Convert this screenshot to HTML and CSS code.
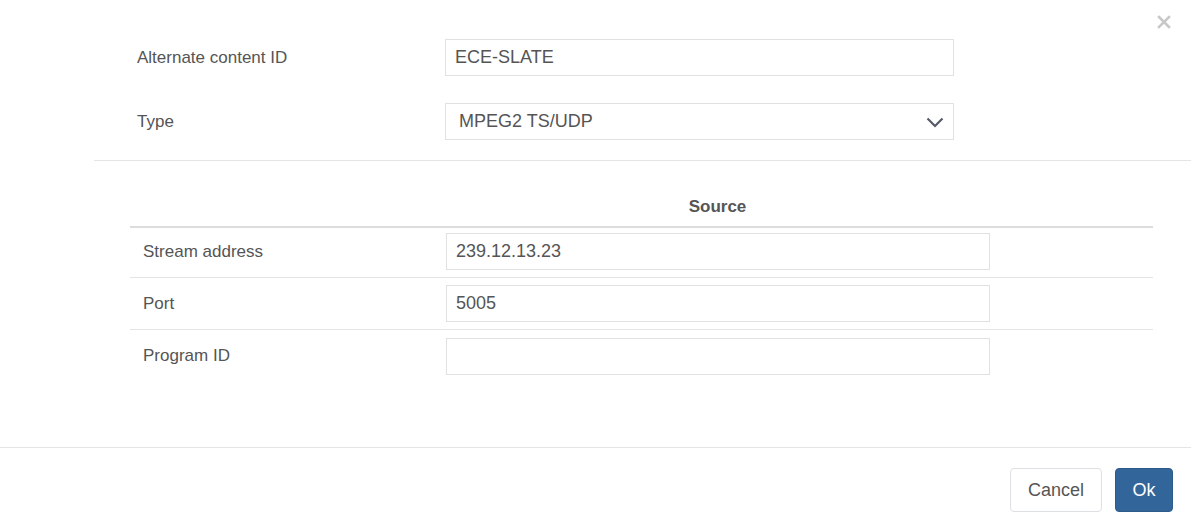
FILE: index.html
```html
<!DOCTYPE html>
<html lang="en">
<head>
<meta charset="utf-8">
<title>Alternate content</title>
<link rel="stylesheet" href="styles.css">
</head>
<body>
<div class="modal">
  <button class="close" aria-label="Close">
    <svg width="14" height="14" viewBox="0 0 14 14"><path d="M2 2 L12 12 M12 2 L2 12" stroke="#c8c8c8" stroke-width="2.6" stroke-linecap="square"/></svg>
  </button>
  <div class="body">
    <div class="form">
      <div class="form-row">
        <label class="form-label">Alternate content ID</label>
        <div class="field">ECE-SLATE</div>
      </div>
      <div class="form-row">
        <label class="form-label">Type</label>
        <div class="field select">MPEG2 TS/UDP
          <svg class="chev" width="18" height="11" viewBox="0 0 18 11"><path d="M1.5 1.5 L9 9 L16.5 1.5" fill="none" stroke="#565b66" stroke-width="2.2"/></svg>
        </div>
      </div>
    </div>
    <div class="divider"></div>
    <div class="table">
      <div class="thead">
        <div class="th-empty"></div>
        <div class="th">Source</div>
        <div></div>
      </div>
      <div class="tr first">
        <div class="td-label">Stream address</div>
        <div class="td-input"><div class="field small">239.12.13.23</div></div>
        <div></div>
      </div>
      <div class="tr">
        <div class="td-label">Port</div>
        <div class="td-input"><div class="field small">5005</div></div>
        <div></div>
      </div>
      <div class="tr last">
        <div class="td-label">Program ID</div>
        <div class="td-input"><div class="field small"></div></div>
        <div></div>
      </div>
    </div>
  </div>
  <div class="footer">
    <button class="btn btn-default">Cancel</button>
    <button class="btn btn-primary">Ok</button>
  </div>
</div>
</body>
</html>
```
FILE: styles.css
```css
html, body {
  margin: 0;
  padding: 0;
  background: #fff;
}
body {
  font-family: "Liberation Sans", Arial, sans-serif;
  color: #555;
}
.modal {
  position: relative;
  width: 1191px;
  height: 529px;
}
.close {
  position: absolute;
  top: 15px;
  left: 1157px;
  padding: 0;
  border: 0;
  background: none;
  width: 14px;
  height: 14px;
  line-height: 0;
}
.body {
  padding-top: 39px;
  height: 448px;
  box-sizing: border-box;
  border-bottom: 1px solid #e5e5e5;
}
.form {
  display: flex;
  flex-direction: column;
  gap: 27px;
  padding-left: 137px;
}
.form-row {
  display: flex;
  align-items: center;
  height: 37px;
}
.form-label {
  width: 308px;
  font-size: 17px;
  color: #555;
}
.field {
  box-sizing: border-box;
  width: 509px;
  height: 37px;
  border: 1px solid #e1e1e1;
  padding: 0 9px;
  font-size: 18px;
  line-height: 35px;
  color: #555;
  position: relative;
}
.select {
  padding-left: 13px;
}
.chev {
  position: absolute;
  right: 9px;
  top: 13px;
}
.divider {
  margin: 20px 0 0 94px;
  border-top: 1px solid #e5e5e5;
}
.table {
  margin: 25px 0 0 130px;
  width: 1023px;
}
.thead, .tr {
  display: grid;
  grid-template-columns: 306px 563px 1fr;
}
.thead {
  height: 40px;
  border-bottom: 2px solid #dddddd;
  align-items: center;
}
.th {
  text-align: center;
  font-weight: bold;
  font-size: 17px;
  color: #555;
  padding-top: 2px;
}
.tr {
  height: 52px;
  box-sizing: border-box;
  padding: 7px 0 7px;
  border-bottom: 1px solid #e5e5e5;
  align-items: center;
}
.tr.first {
  height: 50px;
  padding-top: 5px;
}
.tr.last {
  border-bottom: 0;
}
.td-label {
  padding-left: 13px;
  font-size: 17px;
  color: #555;
}
.td-input {
  padding-left: 10px;
}
.field.small {
  width: 544px;
}
.footer {
  display: flex;
  justify-content: flex-end;
  gap: 13px;
  padding: 20px 18px 0 0;
}
.btn {
  height: 44px;
  border-radius: 4px;
  font-family: "Liberation Sans", Arial, sans-serif;
  font-size: 18px;
  padding: 0 14px;
  cursor: pointer;
}
.btn-default {
  width: 92px;
  background: #fff;
  border: 1px solid #dde0e3;
  color: #555;
}
.btn-primary {
  width: 58px;
  background: #326599;
  border: 1px solid #2d5c8c;
  color: #fff;
}
```
